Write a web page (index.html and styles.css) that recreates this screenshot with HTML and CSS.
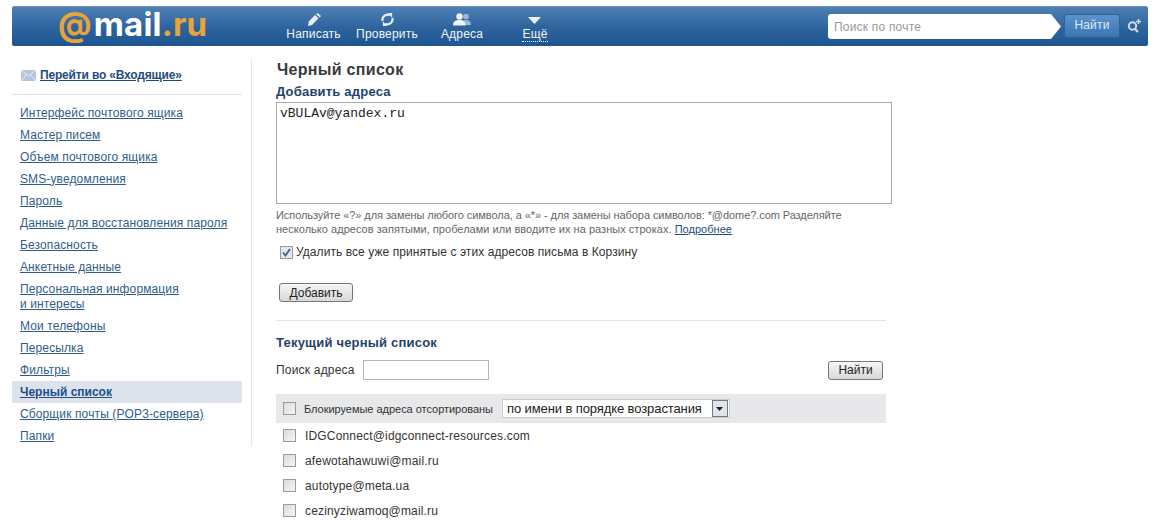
FILE: index.html
```html
<!DOCTYPE html>
<html lang="ru">
<head>
<meta charset="utf-8">
<title>Черный список</title>
<link rel="stylesheet" href="styles.css">
</head>
<body>
<header class="topbar">
  <div class="logo"><span class="logo-at">@</span><span class="logo-mail">mail</span><span class="logo-ru">.ru</span></div>
  <nav class="actions">
    <a class="action act-write"><svg width="14" height="13" viewBox="0 0 14 13"><path d="M1 13l.8-4.500L8 2l3.500 3.200L5 12z" fill="#e8eef6"/><path d="M9 1l1.500-1L14 3l-1.200 1.500z" fill="#e8eef6"/></svg><span>Написать</span></a>
    <a class="action act-check"><svg width="15" height="14" viewBox="0 0 15 14"><path d="M2.200 8.500A5.400 5.400 0 0 1 10 2.500" fill="none" stroke="#e8eef6" stroke-width="2.400"/><path d="M12.800 5.500A5.400 5.400 0 0 1 5 11.500" fill="none" stroke="#e8eef6" stroke-width="2.400"/><path d="M8 0h4.500v5z M7 14H2.500V9z" fill="#e8eef6"/></svg><span>Проверить</span></a>
    <a class="action act-addr"><svg width="18" height="13" viewBox="0 0 18 13"><circle cx="13" cy="3.500" r="2.800" fill="#9db7d6"/><path d="M9 12c0-4 2-5 4-5s5 1 5 5z" fill="#9db7d6"/><circle cx="6.500" cy="3.500" r="3.200" fill="#f0f4f9"/><path d="M0 12.500c0-4.500 3-5.500 6.500-5.500s6 1 6 5.500z" fill="#f0f4f9"/></svg><span>Адреса</span></a>
    <a class="action act-more"><svg width="14" height="13" viewBox="0 0 14 13"><path d="M0 4h13l-6.500 7z" fill="#f0f4f9"/></svg><span class="more-label">Ещё</span></a>
  </nav>
  <div class="search">
    <div class="search-field">Поиск по почте</div>
    <button class="search-btn">Найти</button>
    <svg class="search-icon" width="15" height="15" viewBox="0 0 15 15"><circle cx="5.500" cy="8" r="3.700" fill="none" stroke="#cfdcec" stroke-width="2"/><path d="M8 11l3 3" stroke="#cfdcec" stroke-width="2.200"/><path d="M11.500 1v5M9 3.500h5" stroke="#cfdcec" stroke-width="1.500"/></svg>
  </div>
</header>

<div class="page">
  <aside class="sidebar">
    <div class="inbox">
      <svg width="15" height="11" viewBox="0 0 15 11"><rect width="15" height="11" fill="#b4c6da"/><path d="M0 0l7.500 6L15 0M0 11l5.500-6.500M15 11L9.500 4.500" fill="none" stroke="#e6edf5" stroke-width="1"/></svg>
      <a class="inbox-link">Перейти во «Входящие»</a>
    </div>
    <ul class="menu">
      <li><a>Интерфейс почтового ящика</a></li>
      <li><a>Мастер писем</a></li>
      <li><a>Объем почтового ящика</a></li>
      <li><a>SMS-уведомления</a></li>
      <li><a>Пароль</a></li>
      <li><a>Данные для восстановления пароля</a></li>
      <li><a>Безопасность</a></li>
      <li><a>Анкетные данные</a></li>
      <li><a>Персональная информация<br>и интересы</a></li>
      <li><a>Мои телефоны</a></li>
      <li><a>Пересылка</a></li>
      <li><a>Фильтры</a></li>
      <li class="active"><a>Черный список</a></li>
      <li><a>Сборщик почты (POP3-сервера)</a></li>
      <li><a>Папки</a></li>
    </ul>
  </aside>

  <main class="content">
    <h1 class="title">Черный список</h1>
    <h2 class="subtitle">Добавить адреса</h2>
    <div class="textarea">vBULAv@yandex.ru</div>
    <p class="hint"><span class="hint-first">Используйте «?» для замены любого символа, а «*» - для замены набора символов: *@dome?.com Разделяйте</span><br><span class="hint-second">несколько адресов запятыми, пробелами или вводите их на разных строках. <a>Подробнее</a></span></p>
    <label class="delete-row"><span class="check checked"><svg width="9" height="9" viewBox="0 0 9 9"><path d="M1 4.500l2.500 3L8 1" fill="none" stroke="#4a5a78" stroke-width="1.800"/></svg></span>Удалить все уже принятые с этих адресов письма в Корзину</label>
    <button class="btn add-btn">Добавить</button>
    <div class="divider"></div>
    <h2 class="subtitle current">Текущий черный список</h2>
    <div class="find-row">
      <span class="find-label">Поиск адреса</span>
      <div class="find-input"></div>
      <button class="btn find-btn">Найти</button>
    </div>
    <div class="sort-row">
      <span class="check"></span>
      <span class="sort-label">Блокируемые адреса отсортированы</span>
      <div class="select"><span class="select-text">по имени в порядке возрастания</span><span class="select-arrow"><svg width="7" height="4" viewBox="0 0 7 4"><path d="M0 0h7L3.500 4z" fill="#222"/></svg></span></div>
    </div>
    <ul class="addresses">
      <li><span class="check"></span>IDGConnect@idgconnect-resources.com</li>
      <li><span class="check"></span>afewotahawuwi@mail.ru</li>
      <li><span class="check"></span>autotype@meta.ua</li>
      <li><span class="check"></span>cezinyziwamoq@mail.ru</li>
    </ul>
  </main>
</div>
</body>
</html>
```
FILE: styles.css
```css
* { box-sizing: border-box; }
html, body { margin: 0; padding: 0; height: 524px; overflow: hidden; }
body { background: #fff; font-family: "Liberation Sans", Arial, sans-serif; font-size: 12px; color: #333; }
a { color: #1d4d7e; text-decoration: underline; }
ul { list-style: none; margin: 0; padding: 0; }

.topbar { display: flex; align-items: stretch; height: 40px; margin: 6px 8px 0 12px; border-radius: 2px;
  background: linear-gradient(#4e7fb3, #2f659f 50%, #1d5590); color: #fff; border-top: 1px solid #6f94bd; }
.logo { width: 248px; padding-left: 46px; font-family: Inter, "Liberation Sans", sans-serif; font-size: 33px; line-height: 35px; white-space: nowrap; font-weight: 700; letter-spacing: .2px; }
.logo-at, .logo-ru { color: #e8a43a; }
.logo-at { margin-right: 2px; }
.logo-mail { color: #fff; }
.actions { display: flex; }
.action { display: flex; flex-direction: column; align-items: center; color: #f0f5fa; text-decoration: none; font-size: 12px; height: 38px; padding-top: 6px; letter-spacing: .2px; }
.action svg { display: block; height: 13px; }
.action span { line-height: 14px; margin-top: 1px; }
.act-write { width: 55px; margin-left: 26px; }
.act-check { width: 62px; margin-left: 15px; }
.act-addr { width: 42px; margin-left: 23px; }
.act-more { width: 26px; margin-left: 39px; }
.more-label { border-bottom: 1px dotted #fff; }
.search { display: flex; align-items: flex-start; margin-left: auto; padding-top: 7px; }
.search-field { width: 233px; height: 25px; background: #fff; color: #9a9a9a; line-height: 26px; padding-left: 6px; font-size: 12px; letter-spacing: .2px; border-radius: 3px;
  clip-path: polygon(0 0, 223px 0, 100% 50%, 223px 100%, 0 100%); }
.search-btn { width: 56px; height: 24px; margin-left: 3px; border: 1px solid #2f6299; border-radius: 3px; background: linear-gradient(#5a93cd, #3a74b3); color: #dfeaf6; font: 12px "Liberation Sans", sans-serif; letter-spacing: .2px; padding: 0 0 3px; }
.search-icon { margin: 4px 6px 0 7px; }

.page { display: flex; align-items: flex-start; padding: 13px 0 0 12px; }
.sidebar { width: 240px; height: 387px; border-right: 1px solid #e4e4e4; padding-top: 4px; }
.inbox { display: flex; align-items: center; gap: 4px; height: 32px; padding: 0 0 7px 9px; margin: 0 9px 7px 0; border-bottom: 1px solid #e0e0e0; }
.inbox-link { font-weight: bold; font-size: 12px; letter-spacing: -.17px; color: #1d4d7e; }
.menu { margin-right: 9px; }
.menu li { padding: 3.500px 8px; line-height: 15px; letter-spacing: .12px; }
.menu a { color: #2f5d8a; }
.menu .active { background: #dce3ec; border-radius: 2px; }
.menu .active a { font-weight: bold; color: #1d4f88; letter-spacing: 0; }

.content { width: 616px; margin-left: 24px; padding-top: 2px; }
.title { margin: 0; padding-left: 1px; font-size: 16px; line-height: 18px; font-weight: bold; letter-spacing: .3px; color: #3a3a3a; }
.subtitle { margin: 5px 0 0; font-size: 13px; line-height: 16px; font-weight: bold; letter-spacing: .2px; color: #1f4468; }
.textarea { width: 616px; height: 102px; margin-top: 2px; border: 1px solid #a9a9a9; padding: 4px 3px; font-family: "Liberation Mono", monospace; font-size: 13px; line-height: 14px; color: #222; }
.hint { margin: 4px 0 0; font-size: 11px; line-height: 14px; color: #666; }
.hint-first { letter-spacing: -.07px; }
.hint-second { letter-spacing: .03px; }
.hint a { color: #1d4d7e; }
.delete-row { display: flex; align-items: center; margin: 8px 0 0 4px; color: #333; line-height: 16px; letter-spacing: .07px; }
.check { display: inline-flex; align-items: center; justify-content: center; flex: none; width: 13px; height: 13px; border: 1px solid #9a9a9a; background: linear-gradient(135deg, #dcdcdc, #f4f4f4); margin-right: 3px; }
.check.checked { background: #dfe6f0; }
.btn { display: block; height: 19px; border: 1px solid #777; border-radius: 3px; background: linear-gradient(#f6f6f6, #d8d8d8); color: #222; font: 12px "Liberation Sans", sans-serif; padding: 0; }
.add-btn { width: 74px; margin: 23px 0 0 3px; }
.divider { width: 610px; height: 1px; background: #e4e4e4; margin-top: 18px; }
.current { margin-top: 14px; }
.find-row { display: flex; align-items: center; width: 607px; margin-top: 9px; height: 20px; }
.find-label { letter-spacing: .2px; }
.find-input { width: 126px; height: 20px; border: 1px solid #b5b5b5; margin-left: 8px; }
.find-btn { width: 55px; margin-left: auto; }
.sort-row { display: flex; align-items: center; width: 610px; height: 29px; margin-top: 14px; background: #e8e8ea; padding-left: 7px; }
.sort-label { font-size: 11px; margin-left: 5px; letter-spacing: -.03px; color: #333; }
.select { display: flex; align-items: center; justify-content: space-between; width: 228px; height: 19px; margin-left: 9px; background: #fff; border: 1px solid #c9c9c9; padding: 0 1px 0 4px; font-size: 13px; letter-spacing: -.1px; color: #222; }
.select-arrow { display: flex; align-items: center; justify-content: center; width: 16px; height: 17px; border: 1px solid #6d7a8a; background: #e2e4e8; }
.addresses { padding: 0 0 0 7px; }
.addresses li { display: flex; align-items: center; height: 25px; color: #333; letter-spacing: .17px; }
.addresses .check { margin-right: 9px; }
```
